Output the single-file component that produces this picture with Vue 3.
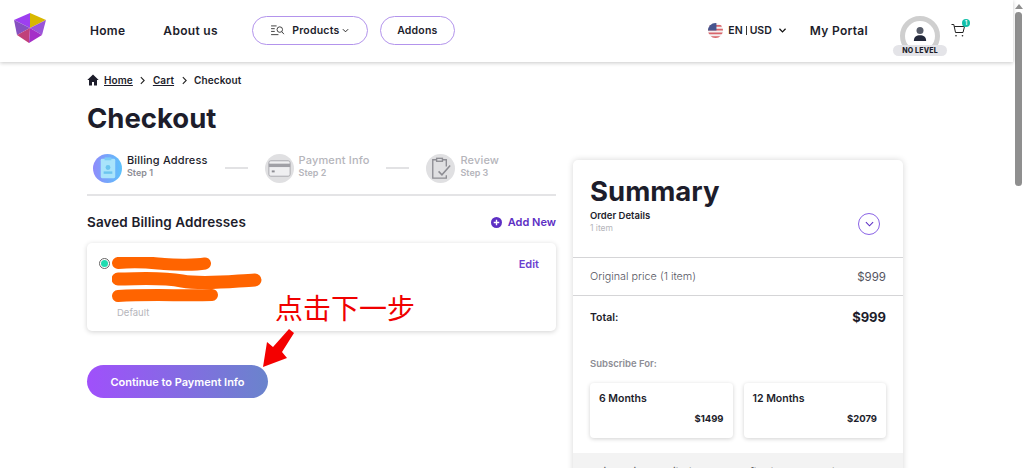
<template>
  <div class="shell">
    <div class="page">
      <header class="topbar">
        <svg class="logo" viewBox="0 0 32 32">
          <polygon points="16,1 0,8 16,16" fill="#9d3ff0" />
          <polygon points="16,1 32,8 16,16" fill="#d8b800" />
          <polygon points="0,8 16,16 3,23" fill="#8650c0" />
          <polygon points="3,23 16,16 15,31" fill="#c0407a" />
          <polygon points="16,16 32,8 28,23" fill="#9a55d8" />
          <polygon points="16,16 28,23 15,31" fill="#a52fc8" />
        </svg>
        <nav class="nav">
          <a class="nav-link home-link">Home</a>
          <a class="nav-link about-link">About us</a>
          <a class="pill products">
            <svg class="pill-icon" viewBox="0 0 16 12" fill="none" stroke="#333" stroke-width="1">
              <path d="M1 1h6M1 4h4M1 7h4M1 10.500h8" />
              <circle cx="10.500" cy="5" r="3" />
              <path d="M12.700 7.200 15 10" />
            </svg>
            Products
            <svg class="chev" viewBox="0 0 8 5" fill="none" stroke="#222" stroke-width="1.100"><path d="M1 1l3 3 3-3" /></svg>
          </a>
          <a class="pill addons">Addons</a>
        </nav>
        <div class="nav-right">
          <div class="locale">
            <svg class="flag" viewBox="0 0 16 16">
              <clipPath id="flagClip"><circle cx="8" cy="8" r="8" /></clipPath>
              <g clip-path="url(#flagClip)">
                <rect width="16" height="16" fill="#f4f0f0" />
                <path d="M0 2h16v2H0zM0 6h16v2H0zM0 10h16v2H0zM0 14h16v2H0z" fill="#d9656b" />
                <rect width="9" height="8" fill="#47558f" />
              </g>
            </svg>
            <span>EN<i class="bar"></i>USD</span>
            <svg class="chev locale-chev" viewBox="0 0 8 5" fill="none" stroke="#111" stroke-width="1.400"><path d="M.5.500 4 4 7.500.500" /></svg>
          </div>
          <a class="nav-link portal">My Portal</a>
          <div class="avatar">
            <div class="ring">
              <svg viewBox="0 0 16 18" class="person">
                <circle cx="8" cy="5" r="4" fill="#565b68" />
                <path d="M1 17c0-5 3-6.500 7-6.500s7 1.500 7 6.500z" fill="#23283a" />
              </svg>
            </div>
            <span class="level">NO LEVEL</span>
          </div>
          <div class="cart">
            <svg viewBox="0 0 15 15" fill="none" stroke="#222" stroke-width="1">
              <path d="M0.500 1.500h2.300l1.700 8h7.500l1.500-6H3.300" />
              <circle cx="5" cy="12.800" r=".8" fill="#222" stroke="none" />
              <circle cx="11.500" cy="12.800" r=".8" fill="#222" stroke="none" />
            </svg>
            <span class="cart-count">1</span>
          </div>
        </div>
      </header>

      <main class="content">
        <div class="crumbs">
          <svg class="home-icon" viewBox="0 0 12 12"><path d="M6 .5.300 6H2v5.500h3V8h2v3.500h3V6h1.700z" fill="#1d1d2b" /></svg>
          <a>Home</a>
          <svg class="crumb-sep" viewBox="0 0 6 10" fill="none" stroke="#222" stroke-width="1.300"><path d="M1 1l4 4-4 4" /></svg>
          <a>Cart</a>
          <svg class="crumb-sep" viewBox="0 0 6 10" fill="none" stroke="#222" stroke-width="1.300"><path d="M1 1l4 4-4 4" /></svg>
          <span>Checkout</span>
        </div>
        <h1 class="title">Checkout</h1>

        <div class="columns">
          <section class="left">
            <div class="steps">
              <template v-for="(s, i) in steps" :key="s.name">
                <div class="step" :class="{ active: i === 0 }">
                  <div class="step-icon">
                    <svg v-if="i === 0" viewBox="0 0 30 30">
                      <rect x="8" y="5" width="15" height="20" rx="1.500" fill="#a9e4fb" />
                      <rect x="12" y="3.500" width="7" height="3" fill="#7ccdf5" />
                      <circle cx="15.500" cy="14" r="2.500" fill="#6cc5ef" />
                      <rect x="11" y="18" width="9" height="2.500" fill="#6cc5ef" />
                    </svg>
                    <svg v-else-if="i === 1" viewBox="0 0 30 30">
                      <rect x="4" y="7" width="22" height="16" rx="2" fill="#efeff1" stroke="#a9a9ae" />
                      <rect x="4" y="10" width="22" height="3.500" fill="#a0a0a6" />
                      <rect x="7" y="17" width="3" height="2" fill="#8e8e94" />
                    </svg>
                    <svg v-else viewBox="0 0 30 30" fill="none" stroke="#8d8d93" stroke-width="1.400">
                      <path d="M21 13V6H7v19h14v-3" />
                      <rect x="11" y="4.500" width="6" height="3" fill="#e2e2e4" />
                      <path d="M13 18l3.500 3.500L25 12" stroke-width="1.600" />
                    </svg>
                  </div>
                  <div class="step-text">
                    <strong>{{ s.name }}</strong>
                    <small>Step {{ i + 1 }}</small>
                  </div>
                </div>
                <span v-if="i < steps.length - 1" class="step-line"></span>
              </template>
            </div>

            <div class="saved-head">
              <h2>Saved Billing Addresses</h2>
              <a class="add-new">
                <svg viewBox="0 0 12 12"><circle cx="6" cy="6" r="6" fill="#5d2fc4" /><path d="M6 3v6M3 6h6" stroke="#fff" stroke-width="1.500" /></svg>
                Add New
              </a>
            </div>

            <div class="address">
              <span class="radio"><i></i></span>
              <div class="address-body">
                <!-- hand-drawn redaction over the address lines -->
                <svg class="scribbles" viewBox="0 0 150 46" fill="none" stroke="#ff6400" stroke-linecap="round">
                  <path d="M6 6C28 4 40 6 52 7S84 8 93 6.500" stroke-width="12" />
                  <path d="M6 22C28 22 48 20 70 24S122 24 143 23" stroke-width="13" />
                  <path d="M6 39C40 37 70 39 100 38" stroke-width="12" />
                </svg>
                <span class="default">Default</span>
              </div>
              <a class="edit">Edit</a>
            </div>

            <button class="continue">Continue to Payment Info</button>

            <span class="note">点击下一步</span>
            <svg class="arrow" viewBox="0 0 32 38">
              <path d="M27 0 32 4 20 23 25 29 1 38 5 13 11 18Z" fill="#f40000" />
            </svg>
          </section>

          <aside class="summary">
            <div class="sum-head">
              <div>
                <h2>Summary</h2>
                <strong>Order Details</strong>
                <small>1 item</small>
              </div>
              <span class="toggle">
                <svg viewBox="0 0 10 6" fill="none" stroke="#5d2fc4" stroke-width="1.200"><path d="M1 1l4 4 4-4" /></svg>
              </span>
            </div>
            <div class="sum-row original">
              <span>Original price (1 item)</span>
              <span class="orig-price">$999</span>
            </div>
            <div class="sum-row total">
              <strong>Total:</strong>
              <b>$999</b>
            </div>
            <div class="subscribe">
              <h3>Subscribe For:</h3>
              <div class="plans">
                <div v-for="p in plans" :key="p.label" class="plan">
                  <strong>{{ p.label }}</strong>
                  <b>{{ p.price }}</b>
                </div>
              </div>
            </div>
            <div class="gray-band">This available with the bonus after the payment</div>
          </aside>
        </div>
      </main>
    </div>

    <div class="scrollbar">
      <span class="sb-up"></span>
      <span class="sb-thumb"></span>
    </div>
  </div>
</template>

<script setup>
const steps = [
  { name: 'Billing Address' },
  { name: 'Payment Info' },
  { name: 'Review' },
]

const plans = [
  { label: '6 Months', price: '$1499' },
  { label: '12 Months', price: '$2079' },
]
</script>

<style>
html, body { margin: 0; overflow: hidden; background: #fff; }
</style>

<style scoped>
.shell {
  display: flex; width: 1024px; height: 468px; overflow: hidden; background: #fff;
  font-family: Inter, "Open Sans", "Liberation Sans", sans-serif; color: #1d1d2b;
}
.page { flex: 1; min-width: 0; }
.scrollbar { width: 11px; display: flex; flex-direction: column; align-items: center; background: #fff; }
.sb-up { margin-top: 4px; border: 4px solid transparent; border-top: 0; border-bottom: 5px solid #8f8f8f; }
.sb-thumb { margin-top: 3px; width: 7px; height: 174px; background: #8f8f8f; border-radius: 4px; }

.topbar {
  height: 62px; display: flex; align-items: center; box-sizing: border-box;
  padding-left: 14px; box-shadow: 0 1px 4px rgba(0, 0, 0, .22); position: relative;
}
.logo { width: 32px; height: 32px; margin-bottom: 6px; }
.nav { display: flex; align-items: center; margin-left: 44px; margin-bottom: 2px; }
.nav-link { font-size: 12px; font-weight: 600; color: #1d1d2b; letter-spacing: .3px; }
.home-link { margin-right: 38px; }
.about-link { margin-right: 34px; }
.pill {
  height: 29px; box-sizing: border-box; border: 1px solid #b394ec; border-radius: 15px;
  display: flex; align-items: center; justify-content: center;
  font-size: 10.500px; font-weight: 600; letter-spacing: .2px;
}
.products { width: 116px; }
.addons { width: 75px; margin-left: 12px; }
.pill-icon { width: 15px; height: 11px; margin-right: 7px; }
.chev { width: 7px; height: 5px; margin-left: 3px; }
.nav-right { display: flex; align-items: center; margin-left: auto; }
.locale { display: flex; align-items: center; font-size: 10.500px; font-weight: 600; margin-bottom: 2px; }
.flag { width: 15px; height: 15px; margin-right: 5px; }
.bar { display: inline-block; width: 1px; height: 9px; background: #333; margin: 0 3px; vertical-align: -1px; }
.locale-chev { width: 7px; height: 5px; margin-left: 7px; }
.portal { margin-left: 24px; margin-bottom: 2px; }
.avatar { position: relative; align-self: flex-start; width: 54px; height: 40px; margin: 9px 0 0 25px; display: flex; justify-content: center; }
.ring {
  box-sizing: border-box; width: 40px; height: 40px; border: 5px solid #cfcfcf; border-radius: 50%;
  display: flex; align-items: center; justify-content: center;
}
.person { width: 14px; height: 16px; margin-top: -4px; }
.level {
  position: absolute; left: 0; bottom: 0; width: 54px; height: 11px; border-radius: 6px; background: #e4e4e8;
  font-size: 7px; line-height: 11px; font-weight: 800; text-align: center; letter-spacing: .2px;
}
.cart { position: relative; width: 15px; height: 15px; margin-left: 4px; margin-right: 47px; margin-top: -1px; }
.cart svg { display: block; width: 15px; height: 15px; }
.cart-count {
  position: absolute; left: 11px; top: -4px; width: 8px; height: 8px; border-radius: 50%; background: #12bfa8;
  color: #fff; font-size: 6px; line-height: 8px; text-align: center; font-weight: 600;
}

.content { padding: 0 0 0 87px; }
.crumbs { display: flex; align-items: center; height: 14px; margin-top: 11px; font-size: 10px; font-weight: 600; letter-spacing: .1px; }
.crumbs a { text-decoration: underline; }
.home-icon { width: 12px; height: 12px; margin-right: 5px; }
.crumb-sep { width: 5px; height: 9px; margin: 0 7.500px; }
.title { margin: 13px 0 0; font-size: 27.500px; line-height: 36px; font-weight: 700; }

.columns { display: flex; margin-top: 9px; }
.left { position: relative; width: 469px; }
.steps { display: flex; align-items: center; padding: 8px 0 11px 6px; border-bottom: 2px solid #e4e4e6; height: 30px; }
.step { display: flex; align-items: center; gap: 5px; }
.step-icon { width: 29px; height: 29px; border-radius: 50%; background: #e0e0e2; }
.step-icon svg { display: block; width: 29px; height: 29px; }
.active .step-icon { background: linear-gradient(90deg, #8f8bfb, #5cc2fb); }
.step-text { display: flex; flex-direction: column; color: #b5b5bb; margin-top: -4px; }
.step-text strong { font-size: 11px; line-height: 13px; font-weight: 500; letter-spacing: .15px; }
.step-text small { font-size: 9px; line-height: 11px; font-weight: 600; color: #b5b5bb; }
.active .step-text strong { color: #1d1d2b; }
.active .step-text small { color: #8d8d95; }
.step-line { width: 23px; height: 2px; background: #e2e2e4; margin: 0 17px; }

.saved-head { display: flex; align-items: center; justify-content: space-between; margin-top: 17px; }
.saved-head h2 { margin: 0; font-size: 13.500px; line-height: 18px; font-weight: 600; letter-spacing: .1px; }
.add-new { display: flex; align-items: center; gap: 6px; font-size: 11px; font-weight: 600; color: #5d2fc4; }
.add-new svg { width: 11px; height: 11px; }

.address {
  position: relative; display: flex; margin-top: 12px; height: 88px; box-sizing: border-box; padding: 15px 17px 0 12px;
  border-radius: 5px; box-shadow: 0 1px 5px rgba(0, 0, 0, .18);
}
.radio {
  box-sizing: border-box; width: 11px; height: 11px; border: 1px solid #666; border-radius: 50%;
  display: flex; align-items: center; justify-content: center; flex: none;
}
.radio i { width: 7px; height: 7px; border-radius: 50%; background: #1fdcb0; }
.address-body { display: flex; flex-direction: column; flex: 1; padding-left: 2px; margin-top: -1px; }
.scribbles { display: block; width: 150px; height: 46px; }
.default { margin: 4px 0 0 5px; font-size: 9.500px; line-height: 11px; color: #b5b5bb; }
.edit { font-size: 11px; font-weight: 600; color: #6b3fd0; line-height: 12px; }

.continue {
  display: block; margin-top: 34px; width: 181px; height: 33px; border: 0; border-radius: 17px;
  background: linear-gradient(90deg, #a050fb, #6a84cc); color: #fff;
  font: 600 11px Inter, "Liberation Sans", sans-serif;
}
.note {
  position: absolute; left: 188px; top: 147px; font-size: 28px; line-height: 30px; color: #f00000;
  font-family: "Noto Sans CJK SC", sans-serif;
}
.arrow { position: absolute; left: 175px; top: 184px; width: 32px; height: 38px; }

.summary {
  width: 330px; margin: 15px 0 0 17px; height: 400px; border-radius: 5px 5px 0 0;
  box-shadow: 0 0 6px rgba(0, 0, 0, .16); flex: none;
}
.sum-head { display: flex; justify-content: space-between; align-items: flex-start; height: 98px; box-sizing: border-box; padding: 15px 17px 0; border-bottom: 1px solid #d5d5d7; }
.sum-head h2 { margin: 0 0 3px; font-size: 27.500px; line-height: 32px; font-weight: 700; }
.sum-head strong { display: block; font-size: 9.500px; line-height: 12px; font-weight: 600; }
.sum-head small { display: block; font-size: 8.500px; line-height: 13px; color: #b5b5bb; }
.toggle {
  width: 22px; height: 22px; box-sizing: border-box; border: 1px solid #8a63e6; border-radius: 50%;
  display: flex; align-items: center; justify-content: center; margin: 38px 6px 0 0;
}
.toggle svg { width: 9px; height: 6px; }
.sum-row { display: flex; justify-content: space-between; align-items: center; padding: 0 17px; }
.original { height: 37px; border-bottom: 1px solid #d5d5d7; font-size: 10.800px; color: #55555f; font-weight: 300; }
.orig-price { font-size: 11.500px; font-weight: 400; }
.total { height: 42px; font-size: 10.500px; }
.total strong { font-weight: 600; }
.total b { font-size: 13px; font-weight: 700; }
.subscribe { padding: 0 17px; margin-top: 19px; }
.subscribe h3 { margin: 0; font-size: 9.500px; line-height: 14px; font-weight: 600; color: #8d8d95; }
.plans { display: flex; gap: 11px; margin-top: 12px; }
.plan { flex: 1; height: 55px; box-sizing: border-box; padding: 9px 9px 0; border-radius: 4px; box-shadow: 0 1px 4px rgba(0, 0, 0, .18); display: flex; flex-direction: column; }
.plan strong { font-size: 10.500px; line-height: 14px; font-weight: 600; }
.plan b { margin-top: 7px; text-align: right; font-size: 9.500px; line-height: 12px; font-weight: 700; }
.gray-band { margin-top: 15px; height: 40px; background: #f3f3f3; padding: 12px 17px; font-size: 11px; color: #666; box-sizing: border-box; }
</style>
